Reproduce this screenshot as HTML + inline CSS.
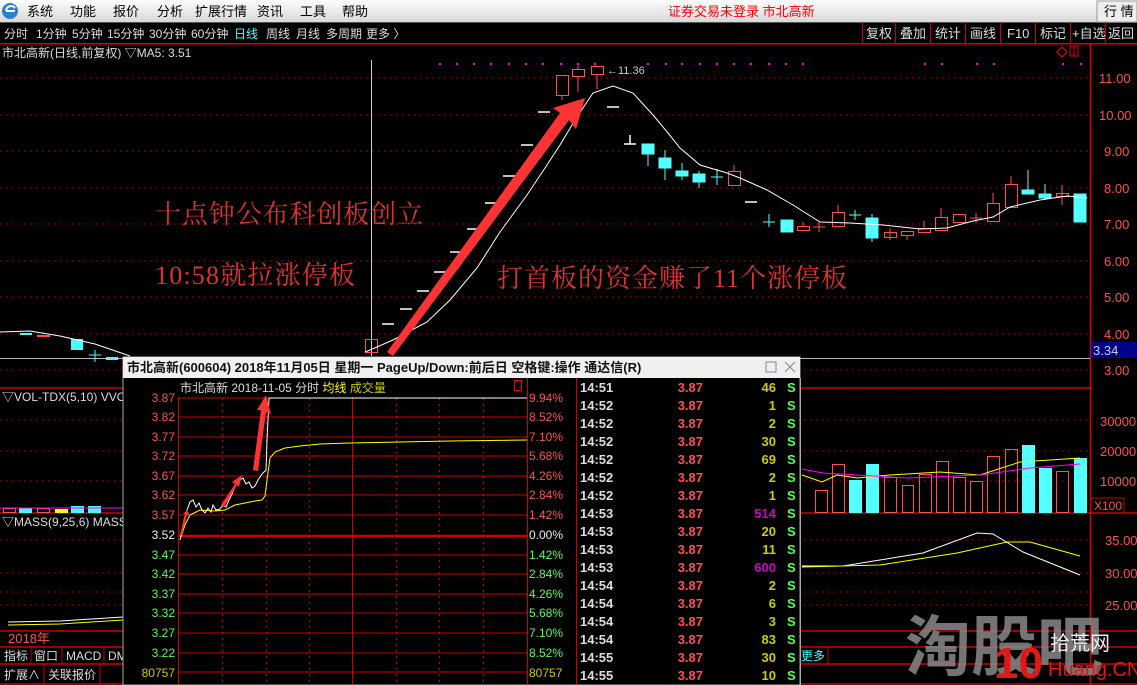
<!DOCTYPE html>
<html><head><meta charset="utf-8">
<style>
html,body{margin:0;padding:0;background:#000;width:1137px;height:685px;overflow:hidden}
svg{display:block}
text{font-family:"Liberation Sans","Noto Sans CJK SC",sans-serif}
text.s{font-family:"Liberation Serif","Noto Serif CJK SC",serif}
</style></head><body>
<svg width="1137" height="685" viewBox="0 0 1137 685" xmlns="http://www.w3.org/2000/svg">
<defs>
<linearGradient id="mg" x1="0" y1="0" x2="0" y2="1"><stop offset="0" stop-color="#fdfdfd"/><stop offset="1" stop-color="#d8d8d8"/></linearGradient>
</defs>
<rect width="1137" height="685" fill="#000"/>
<!-- menu bar -->
<rect x="0" y="0" width="1137" height="22" fill="url(#mg)"/>
<rect x="0" y="22" width="1137" height="1" fill="#555"/>
<circle cx="10" cy="11" r="8" fill="#2a7fd0"/><path d="M6 11 a5 5 0 0 1 9 -3 M6 11 h9" stroke="#fff" stroke-width="2" fill="none"/>
<g font-size="13" fill="#000">
<text x="27" y="16">系统</text><text x="70" y="16">功能</text><text x="113" y="16">报价</text><text x="157" y="16">分析</text><text x="195" y="16">扩展行情</text><text x="257" y="16">资讯</text><text x="300" y="16">工具</text><text x="342" y="16">帮助</text>
</g>
<text x="668" y="16" font-size="13" fill="#f00">证券交易未登录  市北高新</text>
<rect x="1097" y="1" width="40" height="21" fill="#eee" stroke="#999"/>
<text x="1104" y="16" font-size="13" fill="#000">行 情</text>
<!-- toolbar -->
<g font-size="12" fill="#ddd">
<text x="4" y="38">分时</text><text x="36" y="38">1分钟</text><text x="72" y="38">5分钟</text><text x="107" y="38">15分钟</text><text x="149" y="38">30分钟</text><text x="191" y="38">60分钟</text><text x="234" y="38" fill="#4ff">日线</text><text x="266" y="38">周线</text><text x="296" y="38">月线</text><text x="326" y="38">多周期</text><text x="366" y="38">更多 〉</text>
</g>
<rect x="0" y="43" width="1137" height="1.5" fill="#d00"/>
<g stroke="#c00" stroke-width="1">
<line x1="862.5" y1="22" x2="862.5" y2="44"/><line x1="895.5" y1="22" x2="895.5" y2="44"/><line x1="930.5" y1="22" x2="930.5" y2="44"/><line x1="965.5" y1="22" x2="965.5" y2="44"/><line x1="1000.5" y1="22" x2="1000.5" y2="44"/><line x1="1035.5" y1="22" x2="1035.5" y2="44"/><line x1="1070.5" y1="22" x2="1070.5" y2="44"/><line x1="1105.5" y1="22" x2="1105.5" y2="44"/>
</g>
<g font-size="13" fill="#ddd">
<text x="866" y="38">复权</text><text x="900" y="38">叠加</text><text x="935" y="38">统计</text><text x="970" y="38">画线</text><text x="1007" y="38">F10</text><text x="1040" y="38">标记</text><text x="1072" y="38">+自选</text><text x="1108" y="38">返回</text>
</g>
<text x="2" y="57" font-size="12" fill="#ddd">市北高新(日线,前复权) ▽MA5: 3.51</text>
<path d="M1057 52 l5 -5 l5 5 l-5 5z" stroke="#e00" fill="none"/>
<rect x="1070" y="46" width="8" height="10" stroke="#e00" fill="none"/><line x1="1074" y1="46" x2="1074" y2="56" stroke="#e00"/>
<!-- right axis -->
<line x1="1090.5" y1="44" x2="1090.5" y2="685" stroke="#d00" stroke-width="1.5"/>
<g stroke="#c00" stroke-dasharray="1.5,4.5">
<line x1="0" y1="78" x2="1088" y2="78"/><line x1="0" y1="115" x2="1088" y2="115"/><line x1="0" y1="151" x2="1088" y2="151"/><line x1="0" y1="188" x2="1088" y2="188"/><line x1="0" y1="224" x2="1088" y2="224"/><line x1="0" y1="261" x2="1088" y2="261"/><line x1="0" y1="297" x2="1088" y2="297"/><line x1="0" y1="334" x2="1088" y2="334"/><line x1="0" y1="370" x2="1088" y2="370"/>
<line x1="0" y1="420" x2="1088" y2="420"/><line x1="0" y1="451" x2="1088" y2="451"/><line x1="0" y1="481" x2="1088" y2="481"/>
<line x1="0" y1="540" x2="1088" y2="540"/><line x1="0" y1="573" x2="1088" y2="573"/><line x1="0" y1="592" x2="1088" y2="592"/><line x1="0" y1="605" x2="1088" y2="605"/>
</g>
<g font-size="13" fill="#ff5050">
<text x="1099" y="83">11.00</text><text x="1099" y="120">10.00</text><text x="1104" y="156">9.00</text><text x="1104" y="193">8.00</text><text x="1104" y="229">7.00</text><text x="1104" y="266">6.00</text><text x="1104" y="302">5.00</text><text x="1104" y="339">4.00</text><text x="1104" y="375">3.00</text>
<text x="1100" y="426">30000</text><text x="1100" y="456">20000</text><text x="1100" y="486">10000</text>
<text x="1105" y="545">35.00</text><text x="1105" y="578">30.00</text><text x="1105" y="610">25.00</text>
</g>
<rect x="1091" y="342" width="46" height="16" fill="#00008a"/>
<text x="1093" y="355" font-size="13" fill="#ccc">3.34</text>
<rect x="1091" y="498" width="33" height="15" fill="#000" stroke="#c00"/>
<text x="1094" y="510" font-size="12" fill="#ff5050">X100</text>
<line x1="0" y1="358.5" x2="1090" y2="358.5" stroke="#bbb"/>
<!-- magenta dots -->
<g fill="#f0f">
<rect x="439" y="63" width="2" height="2"/><rect x="456" y="63" width="2" height="2"/><rect x="473" y="63" width="2" height="2"/><rect x="490" y="63" width="2" height="2"/><rect x="508" y="63" width="2" height="2"/><rect x="525" y="63" width="2" height="2"/><rect x="542" y="63" width="2" height="2"/><rect x="560" y="63" width="2" height="2"/><rect x="577" y="63" width="2" height="2"/><rect x="594" y="63" width="2" height="2"/><rect x="647" y="63" width="2" height="2"/><rect x="665" y="63" width="2" height="2"/><rect x="681" y="63" width="2" height="2"/><rect x="699" y="63" width="2" height="2"/><rect x="716" y="63" width="2" height="2"/><rect x="733" y="63" width="2" height="2"/><rect x="750" y="63" width="2" height="2"/><rect x="768" y="63" width="2" height="2"/><rect x="785" y="63" width="2" height="2"/><rect x="802" y="63" width="2" height="2"/><rect x="924" y="63" width="2" height="2"/><rect x="941" y="63" width="2" height="2"/><rect x="976" y="63" width="2" height="2"/><rect x="993" y="63" width="2" height="2"/><rect x="1062" y="63" width="2" height="2"/><rect x="1080" y="63" width="2" height="2"/>
</g>
<line x1="371.5" y1="60" x2="371.5" y2="356" stroke="#ccc"/>
<!-- left candles -->
<g>
<rect x="20" y="333" width="12" height="2" fill="#4ff"/><rect x="37" y="335" width="13" height="2" fill="#ff5050"/>
<rect x="71" y="339" width="12" height="11" fill="#4ff"/><line x1="89" y1="355" x2="101" y2="355" stroke="#4ff"/><line x1="95" y1="350" x2="95" y2="362" stroke="#4ff"/>
<rect x="106" y="357" width="12" height="3" fill="#4ff"/>
</g>
<!-- white dashes (limit-up) -->
<g stroke="#fff" stroke-width="1.5">
<line x1="382" y1="324" x2="394" y2="324"/><line x1="400" y1="309" x2="412" y2="309"/><line x1="417" y1="291" x2="429" y2="291"/><line x1="434" y1="272" x2="446" y2="272"/><line x1="450" y1="252" x2="462" y2="252"/><line x1="467" y1="229" x2="479" y2="229"/><line x1="485" y1="203" x2="497" y2="203"/><line x1="503" y1="176" x2="515" y2="176"/><line x1="521" y1="145" x2="533" y2="145"/><line x1="538" y1="112" x2="550" y2="112"/><line x1="607" y1="107" x2="619" y2="107"/><line x1="624" y1="144" x2="636" y2="144"/><line x1="630" y1="135" x2="630" y2="144"/><line x1="745" y1="202" x2="757" y2="202"/>
</g>
<!-- red hollow candles -->
<g stroke="#ff5050" fill="none">
<rect x="365.5" y="339.5" width="12" height="13"/>
<rect x="556.5" y="75.5" width="12" height="20"/><line x1="562" y1="95" x2="562" y2="100"/>
<rect x="572.5" y="69.5" width="12" height="7"/><line x1="578" y1="66" x2="578" y2="69"/><line x1="578" y1="76" x2="578" y2="92"/>
<rect x="591.5" y="66.5" width="12" height="8"/><line x1="597" y1="74" x2="597" y2="89"/>
<rect x="728.5" y="171.5" width="12" height="14"/><line x1="734" y1="165" x2="734" y2="171"/>
<rect x="797.5" y="226.5" width="12" height="4"/><line x1="803" y1="222" x2="803" y2="226"/>
<line x1="813" y1="227" x2="825" y2="227"/><line x1="819" y1="222" x2="819" y2="232"/>
<rect x="832.5" y="212.5" width="12" height="14"/><line x1="838" y1="205" x2="838" y2="212"/>
<rect x="884.5" y="232.5" width="12" height="5"/><line x1="890" y1="228" x2="890" y2="240"/>
<rect x="901.5" y="231.5" width="12" height="4"/><line x1="907" y1="235" x2="907" y2="240"/>
<rect x="918.5" y="228.5" width="12" height="4"/><line x1="924" y1="221" x2="924" y2="228"/>
<rect x="935.5" y="217.5" width="12" height="13"/><line x1="941" y1="208" x2="941" y2="217"/>
<rect x="953.5" y="214.5" width="12" height="8"/>
<line x1="970" y1="218" x2="982" y2="218"/><line x1="976" y1="213" x2="976" y2="223"/>
<rect x="987.5" y="203.5" width="12" height="18"/><line x1="993" y1="193" x2="993" y2="203"/>
<rect x="1005.5" y="184.5" width="12" height="23"/><line x1="1011" y1="176" x2="1011" y2="184"/>
<rect x="1056.5" y="193.5" width="12" height="3"/><line x1="1062" y1="185" x2="1062" y2="205"/>
</g>
<!-- cyan candles -->
<g fill="#54ffff" stroke="#54ffff">
<rect x="642" y="144" width="12" height="10"/><line x1="648" y1="154" x2="648" y2="166"/>
<rect x="659" y="158" width="12" height="10"/><line x1="665" y1="150" x2="665" y2="180"/>
<rect x="676" y="171" width="12" height="5"/><line x1="682" y1="163" x2="682" y2="180"/>
<rect x="693" y="174" width="12" height="8"/><line x1="699" y1="171" x2="699" y2="188"/>
<line x1="711" y1="177" x2="723" y2="177"/><line x1="717" y1="169" x2="717" y2="185"/>
<line x1="763" y1="222" x2="775" y2="222"/><line x1="769" y1="214" x2="769" y2="227"/>
<rect x="781" y="220" width="12" height="12"/>
<line x1="849" y1="215" x2="861" y2="215"/><line x1="855" y1="210" x2="855" y2="220"/>
<rect x="866" y="218" width="12" height="20"/><line x1="872" y1="214" x2="872" y2="242"/>
<rect x="1022" y="190" width="12" height="4"/><line x1="1028" y1="170" x2="1028" y2="190"/>
<rect x="1039" y="194" width="12" height="4"/><line x1="1045" y1="184" x2="1045" y2="200"/>
<rect x="1074" y="194" width="12" height="28"/>
</g>
<text x="607" y="74" font-size="11" fill="#ccc">←11.36</text>
<!-- MA5 -->
<polyline fill="none" stroke="#fff" stroke-width="1" points="0,332 30,331 60,336 95,344 130,356"/>
<polyline fill="none" stroke="#fff" stroke-width="1" points="365,352 370,350 393,340 427,322 450,300 477,268 500,232 527,195 545,168 560,145 575,120 593,93 613,86 633,93 653,115 668,133 680,148 700,165 727,173 740,178 767,190 793,205 820,222 850,223 883,225 920,229 947,228 973,221 993,217 1010,207 1040,200 1067,196 1087,198"/>
<!-- arrow -->
<path d="M387 352 L560 113 L553 108 L585 98 L576 129 L569 120 L393 356Z" fill="#f33"/>
<!-- annotations -->
<g fill="#e03030" font-size="26">
<text class="s" x="155" y="223" textLength="268">十点钟公布科创板创立</text>
<text class="s" x="155" y="284" textLength="200">10:58就拉涨停板</text>
<text class="s" x="497" y="287" textLength="350">打首板的资金赚了11个涨停板</text>
</g>
<!-- lower left panels -->
<g stroke="#c00" stroke-width="1.5">
<line x1="0" y1="388" x2="1090" y2="388"/><line x1="0" y1="513" x2="1137" y2="513"/><line x1="0" y1="631" x2="1137" y2="631"/><line x1="0" y1="647" x2="1137" y2="647"/><line x1="0" y1="664" x2="1137" y2="664"/><line x1="0" y1="684" x2="1137" y2="684"/>
</g>
<text x="2" y="401" font-size="12" fill="#ddd">▽VOL-TDX(5,10) VVO</text>
<text x="2" y="526" font-size="12" fill="#ddd">▽MASS(9,25,6) MASS</text>
<g>
<rect x="3.5" y="508.5" width="12" height="4" stroke="#ff5050" fill="none"/><rect x="19" y="508" width="13" height="5" fill="#4ff"/><rect x="37.5" y="508.5" width="12" height="4" stroke="#ff5050" fill="none"/><rect x="55" y="509" width="13" height="4" fill="#ff0"/><rect x="71" y="506" width="13" height="7" fill="#4ff"/><rect x="88" y="506" width="13" height="7" fill="#4ff"/>
<line x1="0" y1="508" x2="123" y2="508" stroke="#f0f"/>
</g>
<polyline points="8,622 60,621 123,617" fill="none" stroke="#fff"/>
<polyline points="8,625 60,624 123,620" fill="none" stroke="#ff0"/>
<text x="8" y="643" font-size="13" fill="#ff5050">2018年</text>
<g stroke="#c00"><line x1="31" y1="647" x2="31" y2="664"/><line x1="62" y1="647" x2="62" y2="664"/><line x1="104" y1="647" x2="104" y2="664"/><line x1="44" y1="664" x2="44" y2="684"/><line x1="100" y1="664" x2="100" y2="684"/></g>
<g font-size="12" fill="#ddd"><text x="4" y="660">指标</text><text x="34" y="660">窗口</text><text x="66" y="660">MACD</text><text x="108" y="660">DM</text><text x="4" y="679">扩展∧</text><text x="48" y="679">关联报价</text></g>
<!-- right volume -->
<g stroke="#ff5050" fill="none">
<rect x="815.5" y="490.5" width="12" height="22"/><rect x="832.5" y="464.5" width="12" height="48"/><rect x="884.5" y="477.5" width="12" height="35"/><rect x="902.5" y="485.5" width="11" height="27"/><rect x="919.5" y="474.5" width="12" height="38"/><rect x="936.5" y="461.5" width="12" height="51"/><rect x="953.5" y="477.5" width="12" height="35"/><rect x="970.5" y="481.5" width="12" height="31"/><rect x="987.5" y="456.5" width="12" height="56"/><rect x="1005.5" y="449.5" width="12" height="63"/><rect x="1056.5" y="471.5" width="12" height="41"/>
</g>
<g fill="#54ffff"><rect x="849" y="480" width="13" height="33"/><rect x="866" y="464" width="13" height="49"/><rect x="1022" y="445" width="13" height="68"/><rect x="1039" y="468" width="13" height="45"/><rect x="1074" y="458" width="13" height="55"/></g>
<polyline fill="none" stroke="#ff0" points="802,475 822,482 837,475 857,478 890,475 940,472 980,475 1020,462 1080,458"/>
<polyline fill="none" stroke="#f0f" points="802,469 823,473 907,478 980,475 1030,468 1080,464"/>
<polyline fill="none" stroke="#fff" points="802,566 843,566 923,553 977,533 993,534 1023,552 1080,575"/>
<polyline fill="none" stroke="#ff0" points="802,567 880,565 957,553 1007,542 1030,542 1080,556"/>
<text x="801" y="660" font-size="12" fill="#4ff">更多</text>
<line x1="828" y1="647" x2="828" y2="664" stroke="#c00"/>
<!-- watermark -->
<text x="905" y="670" font-size="66" font-weight="bold" fill="#888" fill-opacity="0.85">淘股吧</text>
<text x="994" y="678" font-size="44" font-weight="bold" fill="#e01818" font-family="Liberation Sans">10</text>
<text x="1050" y="650" font-size="20" fill="#eee">拾荒网</text>
<text x="1048" y="676" font-size="20" fill="#e01818" font-family="Liberation Sans">Huang.CN</text>
<!-- popup -->
<rect x="123" y="357" width="677" height="328" fill="#000" stroke="#aaa"/>
<rect x="123" y="357" width="677" height="21" fill="#f0f0f0"/>
<text x="127" y="372" font-size="13" font-weight="bold" fill="#111">市北高新(600604)  2018年11月05日 星期一 PageUp/Down:前后日 空格键:操作 通达信(R)</text>
<rect x="766" y="362" width="10" height="10" fill="none" stroke="#888"/>
<path d="M785 362 l10 10 M795 362 l-10 10" stroke="#888"/>
<text x="180" y="392" font-size="12" fill="#ddd">市北高新   2018-11-05 分时 <tspan fill="#ff0">均线</tspan> <tspan fill="#cc0">成交量</tspan></text>
<rect x="514.5" y="380.5" width="7" height="10" fill="none" stroke="#e00"/>
<g stroke="#c00" stroke-width="1">
<line x1="178" y1="398" x2="527" y2="398"/><line x1="178" y1="417" x2="527" y2="417"/><line x1="178" y1="437" x2="527" y2="437"/><line x1="178" y1="456" x2="527" y2="456"/><line x1="178" y1="476" x2="527" y2="476"/><line x1="178" y1="495" x2="527" y2="495"/><line x1="178" y1="515" x2="527" y2="515"/><line x1="178" y1="555" x2="527" y2="555"/><line x1="178" y1="574" x2="527" y2="574"/><line x1="178" y1="594" x2="527" y2="594"/><line x1="178" y1="613" x2="527" y2="613"/><line x1="178" y1="633" x2="527" y2="633"/><line x1="178" y1="653" x2="527" y2="653"/><line x1="178" y1="672" x2="527" y2="672"/>
<line x1="178.5" y1="397" x2="178.5" y2="685"/><line x1="527.5" y1="378" x2="527.5" y2="685"/><line x1="352.5" y1="397" x2="352.5" y2="685"/><line x1="576.5" y1="378" x2="576.5" y2="685"/>
</g>
<line x1="178" y1="536" x2="527" y2="536" stroke="#c00" stroke-width="2.5"/>
<g stroke="#c00" stroke-dasharray="2,4"><line x1="222.5" y1="398" x2="222.5" y2="685"/><line x1="266.5" y1="398" x2="266.5" y2="685"/><line x1="309.5" y1="398" x2="309.5" y2="685"/><line x1="396.5" y1="398" x2="396.5" y2="685"/><line x1="439.5" y1="398" x2="439.5" y2="685"/><line x1="483.5" y1="398" x2="483.5" y2="685"/></g>
<g font-size="12" text-anchor="end">
<text x="175" y="402" fill="#ff5050">3.87</text><text x="175" y="421" fill="#ff5050">3.82</text><text x="175" y="441" fill="#ff5050">3.77</text><text x="175" y="460" fill="#ff5050">3.72</text><text x="175" y="480" fill="#ff5050">3.67</text><text x="175" y="499" fill="#ff5050">3.62</text><text x="175" y="519" fill="#ff5050">3.57</text><text x="175" y="539" fill="#eee">3.52</text><text x="175" y="559" fill="#5f5">3.47</text><text x="175" y="578" fill="#5f5">3.42</text><text x="175" y="598" fill="#5f5">3.37</text><text x="175" y="617" fill="#5f5">3.32</text><text x="175" y="637" fill="#5f5">3.27</text><text x="175" y="657" fill="#5f5">3.22</text><text x="175" y="677" fill="#cc0">80757</text>
</g>
<g font-size="12">
<text x="529" y="402" fill="#ff5050">9.94%</text><text x="529" y="421" fill="#ff5050">8.52%</text><text x="529" y="441" fill="#ff5050">7.10%</text><text x="529" y="460" fill="#ff5050">5.68%</text><text x="529" y="480" fill="#ff5050">4.26%</text><text x="529" y="499" fill="#ff5050">2.84%</text><text x="529" y="519" fill="#ff5050">1.42%</text><text x="529" y="539" fill="#eee">0.00%</text><text x="529" y="559" fill="#5f5">1.42%</text><text x="529" y="578" fill="#5f5">2.84%</text><text x="529" y="598" fill="#5f5">4.26%</text><text x="529" y="617" fill="#5f5">5.68%</text><text x="529" y="637" fill="#5f5">7.10%</text><text x="529" y="657" fill="#5f5">8.52%</text><text x="529" y="677" fill="#cc0">80757</text>
</g>
<polyline fill="none" stroke="#ff0" points="181,537 185,525 190,515 200,510 215,511 225,510 235,505 245,503 255,501 262,500 265,496 267,480 270,458 275,452 285,448 300,446 320,444 350,443 400,442 450,441 527,440"/>
<polyline fill="none" stroke="#fff" points="180,540 182,532 184,520 187,510 190,502 193,500 196,507 199,503 202,510 205,513 208,508 211,512 213,505 216,510 220,509 223,505 226,507 229,500 232,494 236,484 240,480 243,478 246,484 249,482 252,488 255,486 258,480 262,474 266,470 267,440 268,420 269,398 527,398"/>
<g fill="#f33">
<path d="M180 535 L182 535 L187 515 L190 516 L187 510 L183 514 L185 514Z"/>
<path d="M221 505 L235 484 L232 482 L242 475 L239 487 L237 485 L224 507Z"/>
<path d="M253 470 L261 410 L257 410 L266 395 L271 414 L266 412 L258 471Z"/>
</g>
<!-- tick table -->
<g font-size="13" font-weight="bold">
<g fill="#ddd"><text x="580" y="392">14:51</text><text x="580" y="410">14:52</text><text x="580" y="428">14:52</text><text x="580" y="446">14:52</text><text x="580" y="464">14:52</text><text x="580" y="482">14:52</text><text x="580" y="500">14:52</text><text x="580" y="518">14:53</text><text x="580" y="536">14:53</text><text x="580" y="554">14:53</text><text x="580" y="572">14:53</text><text x="580" y="590">14:54</text><text x="580" y="608">14:54</text><text x="580" y="626">14:54</text><text x="580" y="644">14:54</text><text x="580" y="662">14:55</text><text x="580" y="680">14:55</text></g>
<g fill="#ff5050" text-anchor="end"><text x="703" y="392">3.87</text><text x="703" y="410">3.87</text><text x="703" y="428">3.87</text><text x="703" y="446">3.87</text><text x="703" y="464">3.87</text><text x="703" y="482">3.87</text><text x="703" y="500">3.87</text><text x="703" y="518">3.87</text><text x="703" y="536">3.87</text><text x="703" y="554">3.87</text><text x="703" y="572">3.87</text><text x="703" y="590">3.87</text><text x="703" y="608">3.87</text><text x="703" y="626">3.87</text><text x="703" y="644">3.87</text><text x="703" y="662">3.87</text><text x="703" y="680">3.87</text></g>
<g fill="#cc0" text-anchor="end"><text x="776" y="392">46</text><text x="776" y="410">1</text><text x="776" y="428">2</text><text x="776" y="446">30</text><text x="776" y="464">69</text><text x="776" y="482">2</text><text x="776" y="500">1</text><text x="776" y="518" fill="#c0c">514</text><text x="776" y="536">20</text><text x="776" y="554">11</text><text x="776" y="572" fill="#c0c">600</text><text x="776" y="590">2</text><text x="776" y="608">6</text><text x="776" y="626">3</text><text x="776" y="644">83</text><text x="776" y="662">30</text><text x="776" y="680">10</text></g>
<g fill="#5f5"><text x="787" y="392">S</text><text x="787" y="410">S</text><text x="787" y="428">S</text><text x="787" y="446">S</text><text x="787" y="464">S</text><text x="787" y="482">S</text><text x="787" y="500">S</text><text x="787" y="518">S</text><text x="787" y="536">S</text><text x="787" y="554">S</text><text x="787" y="572">S</text><text x="787" y="590">S</text><text x="787" y="608">S</text><text x="787" y="626">S</text><text x="787" y="644">S</text><text x="787" y="662">S</text><text x="787" y="680">S</text></g>
</g>
<line x1="800.5" y1="378" x2="800.5" y2="685" stroke="#aaa"/>
</svg>
</body></html>
